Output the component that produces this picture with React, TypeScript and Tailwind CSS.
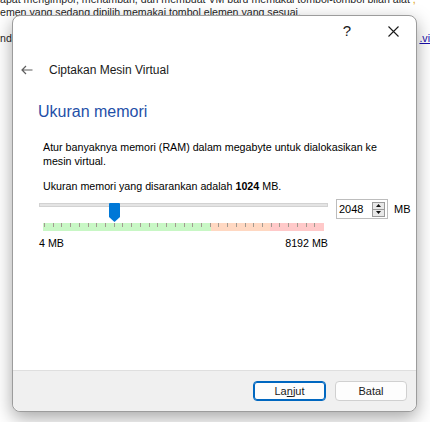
import React from 'react';

const Tick = () => (
  <div className="w-[8.73px] shrink-0 h-full">
    <div className="ml-[1px] w-px h-[4px] bg-[#a29a90]" />
  </div>
);

const App = () => {
  const ticks = Array.from({ length: 32 });

  return (
    <div className="relative h-[422px] w-[430px] overflow-hidden bg-white font-['Liberation_Sans',Arial,sans-serif] text-black">
      {/* Page behind the dialog */}
      <div className="-mt-[7px] text-[10.6px] leading-[13px] text-[#1f1f1f] whitespace-nowrap">
        <p>apat mengimpor, menambah, dan membuat VM baru memakai tombol-tombol bilah alat <span className="text-[#e0a000]">,</span></p>
        <p>emen yang sedang dipilih memakai tombol elemen yang sesuai.</p>
        <p className="mt-[13px] flex justify-between">
          <span>nda</span>
          <span className="text-[#1a0dab] underline">.vi</span>
        </p>
      </div>

      {/* Dialog */}
      <div className="absolute left-[12px] top-[15px] flex h-[397px] w-[405px] flex-col rounded-lg border border-[#9c9c9c] bg-white shadow-[0_6px_18px_rgba(0,0,0,0.35)]">
        {/* Title bar */}
        <div className="flex h-[30px] justify-end">
          <div className="flex w-[46px] items-center justify-center text-[15px] text-[#1a1a1a]">?</div>
          <div className="flex w-[46px] items-center justify-center">
            <svg width="11" height="11" viewBox="0 0 11 11" stroke="#1a1a1a" strokeWidth="1.1">
              <path d="M0.5 0.5 L10.5 10.5 M10.5 0.5 L0.5 10.5" />
            </svg>
          </div>
        </div>

        {/* Header */}
        <div className="mt-[14px] flex h-[20px] items-center pl-[8px]">
          <svg width="12" height="10" viewBox="0 0 12 10" fill="none" stroke="#5f5f5f" strokeWidth="1.2">
            <path d="M11.5 5 H1 M5 1 L1 5 L5 9" />
          </svg>
          <span className="ml-[16px] text-[12px] text-[#1a1a1a]">Ciptakan Mesin Virtual</span>
        </div>

        <h1 className="mt-[22px] h-[20px] pl-[25px] text-[16px] leading-[20px] text-[#1f50a8]">Ukuran memori</h1>

        <div className="pl-[30px] text-[10.7px] leading-[14px]">
          <p className="mt-[18px] w-[350px]">
            Atur banyaknya memori (RAM) dalam megabyte untuk dialokasikan ke mesin virtual.
          </p>
          <p className="mt-[11px]">
            Ukuran memori yang disarankan adalah <b>1024</b> MB.
          </p>
        </div>

        {/* Slider row */}
        <div className="mt-[3px] flex items-start pl-[26px]">
          <div className="w-[289px]">
            <div className="relative h-[20px]">
              <div className="mt-[7px] h-[4px] border border-[#d2d2d2] bg-[#e4e4e4]" />
              <svg className="absolute left-[70px] top-0" width="11" height="19" viewBox="0 0 11 19">
                <path d="M1 0 H10 Q11 0 11 1 V14 L5.5 19 L0 14 V1 Q0 0 1 0 Z" fill="#0078d7" />
              </svg>
            </div>
            <div className="relative ml-[4px] flex h-[8px] w-[281px]">
              <div className="w-[168px] bg-[#c8f7c5]" />
              <div className="w-[59px] bg-[#ffd8c2]" />
              <div className="flex-1 bg-[#ffc9c9]" />
              <div className="absolute inset-0 flex">
                {ticks.map((_, i) => (
                  <Tick key={i} />
                ))}
              </div>
            </div>
            <div className="mt-[5px] flex justify-between text-[10.7px] leading-[14px]">
              <span>4 MB</span>
              <span>8192 MB</span>
            </div>
          </div>

          <div className="ml-[8px] mt-[3px] flex h-[20px] w-[52px] items-center border border-[#bdbdbd] bg-white pl-[2px]">
            <span className="flex-1 text-[11px]">2048</span>
            <div className="mr-[2px] flex h-[15px] w-[13px] flex-col border border-[#9a9a9a] bg-[#e8e8e8]">
              <div className="flex flex-1 items-center justify-center border-b border-[#9a9a9a]">
                <svg width="5" height="3" viewBox="0 0 5 3"><path d="M0 3 L2.5 0 L5 3 Z" fill="#111" /></svg>
              </div>
              <div className="flex flex-1 items-center justify-center">
                <svg width="5" height="3" viewBox="0 0 5 3"><path d="M0 0 L2.5 3 L5 0 Z" fill="#111" /></svg>
              </div>
            </div>
          </div>
          <span className="ml-[6px] mt-[6px] text-[11px] leading-[14px]">MB</span>
        </div>

        {/* Footer */}
        <div className="mt-auto flex h-[41px] items-center justify-end gap-[9px] rounded-b-lg border-t border-[#dfdfdf] bg-[#f0f0f0] pr-[9px]">
          <button className="h-[20px] w-[73px] rounded-[4px] border border-[#0067c0] bg-[#fdfdfd] text-[11px] text-[#1a1a1a] shadow-[inset_0_0_0_1px_#0067c0]">
            La<span className="underline">n</span>jut
          </button>
          <button className="h-[20px] w-[72px] rounded-[4px] border border-[#d0d0d0] bg-[#fdfdfd] text-[11px] text-[#1a1a1a]">
            Batal
          </button>
        </div>
      </div>
    </div>
  );
};

export default App;
